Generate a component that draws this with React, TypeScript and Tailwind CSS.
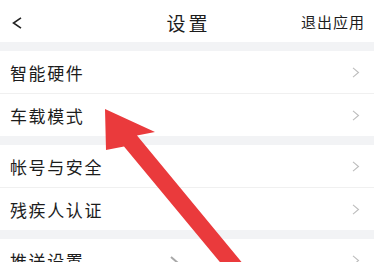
import React from "react";

const font = { fontFamily: '"Noto Sans CJK SC", "Noto Sans", sans-serif' };

function Chevron() {
  return (
    <svg width="8" height="11" viewBox="0 0 8 11" className="shrink-0">
      <path d="M1 0.8 L6.5 5.5 L1 10.2" fill="none" stroke="#bdbdbd" strokeWidth="1.1" />
    </svg>
  );
}

function Row({ label, border }: { label: string; border?: boolean }) {
  return (
    <div className={`h-[42px] flex items-center justify-between pl-[10px] pr-[14px] bg-white ${border ? "border-b border-[#f0f0f0] box-content" : ""}`}>
      <span className="text-[17px] leading-none tracking-[1.6px] text-[#1c1c1c]">{label}</span>
      <Chevron />
    </div>
  );
}

function Gap() {
  return <div className="h-[9px] bg-[#f2f3f5]" />;
}

export default function App() {
  return (
    <div className="relative w-[374px] h-[262px] overflow-hidden bg-white" style={font}>
      <div className="h-[42px] relative flex items-center justify-center">
        <svg width="11" height="12" viewBox="0 0 11 12" className="absolute left-[12px] top-[17px]">
          <path d="M9 0.8 L1.5 6 L9 11.2" fill="none" stroke="#222" strokeWidth="1.6" />
        </svg>
        <span className="text-[19px] leading-none tracking-[3px] text-[#1c1c1c] pl-[3px] mt-[2px]">设置</span>
        <span className="absolute right-[9px] top-[14px] text-[15px] leading-none tracking-[1px] text-[#1c1c1c]">退出应用</span>
      </div>
      <Gap />
      <Row label="智能硬件" border />
      <Row label="车载模式" />
      <Gap />
      <Row label="帐号与安全" border />
      <Row label="残疾人认证" />
      <Gap />
      <Row label="推送设置" />
      <svg className="absolute inset-0 pointer-events-none" width="374" height="262" viewBox="0 0 374 262">
        <path d="M171 257 L178 263" stroke="#a8a8a8" strokeWidth="2" fill="none" />
        <polygon
          points="105,109 155,132 137,135.6 268.5,294.6 255.5,305 124,146.4 106,150"
          fill="#ea3a3c"
        />
      </svg>
    </div>
  );
}
